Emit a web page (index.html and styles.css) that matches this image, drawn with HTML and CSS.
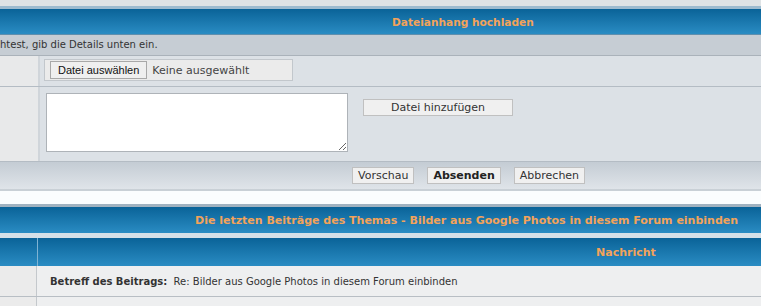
FILE: index.html
```html
<!DOCTYPE html>
<html lang="de">
<head>
  <meta charset="UTF-8" />
  <title>Dateianhang hochladen</title>
  <link rel="stylesheet" href="styles.css">
</head>
<body>
  <div class="panel">
    <div class="cap"></div>
    <div class="head"><span class="title t1">Dateianhang hochladen</span></div>
    <div class="note">htest, gib die Details unten ein.</div>
    <div class="row r1">
      <div class="lab"></div>
      <div class="field">
        <div class="filebox">
          <span class="filebtn">Datei auswählen</span>
          <span class="nofile">Keine ausgewählt</span>
        </div>
      </div>
    </div>
    <div class="row r2">
      <div class="lab"></div>
      <div class="field">
        <textarea class="comment"></textarea>
        <span class="button add">Datei hinzufügen</span>
      </div>
    </div>
    <div class="foot">
      <span class="button">Vorschau</span>
      <span class="button strong">Absenden</span>
      <span class="button">Abbrechen</span>
    </div>
  </div>

  <div class="gap"></div>

  <div class="panel">
    <div class="head h2"><span class="title t2">Die letzten Beiträge des Themas - Bilder aus Google Photos in diesem Forum einbinden</span></div>
    <div class="strip"></div>
    <div class="colhead">
      <div class="lab"></div>
      <div class="colname">Nachricht</div>
    </div>
    <div class="post">
      <div class="lab"></div>
      <div class="subject"><b>Betreff des Beitrags:</b>&nbsp; Re: Bilder aus Google Photos in diesem Forum einbinden</div>
    </div>
    <div class="post last">
      <div class="lab"></div>
      <div class="subject cut">Wenn du die Bilder direkt in den Beitrag einfügen möchtest</div>
    </div>
  </div>
</body>
</html>
```

FILE: styles.css
```css
body {
  margin: 0;
  background-color: #fbfdfe;
  font-family: "DejaVu Sans", Verdana, sans-serif;
  font-size: 10px;
  color: #333;
  overflow: hidden;
}
.cap {
  height: 6px;
  background-color: #dfe3e5;
  border-bottom: 3px solid #9dbbcf;
}
.head {
  height: 25px;
  background: linear-gradient(#0a6398, #2a8cc3);
  display: flex;
  align-items: center;
  border-bottom: 1px solid #5f8fae;
}
.title {
  color: #f3a35a;
  font-weight: bold;
  font-size: 11px;
}
.t1 {
  padding-left: 392px;
  font-size: 10.6px;
}
.t2 {
  padding-left: 195px;
}
.note {
  height: 20px;
  line-height: 20px;
  background-color: #c6cdd4;
  border-bottom: 1px solid #aab2ba;
  color: #333;
}
.row {
  display: flex;
  border-bottom: 1px solid #b4bcc4;
}
.r1 {
  height: 30px;
}
.r2 {
  height: 74px;
}
.lab {
  width: 38px;
  flex: none;
  background-color: #e8e9ea;
  border-right: 2px solid #d0d5da;
}
.field {
  flex: 1;
  background-color: #dce1e6;
  display: flex;
  align-items: flex-start;
  padding-left: 4px;
}
.filebox {
  margin-top: 3px;
  width: 247px;
  height: 20px;
  border: 1px solid #c2c7cc;
  background-color: #ebebeb;
  display: flex;
  align-items: center;
  gap: 5px;
}
.filebtn {
  margin-left: 5px;
  height: 16px;
  padding: 0 7px;
  border: 1px solid #a8a8a8;
  background-color: #efefef;
  font-family: "Liberation Sans", Arial, sans-serif;
  font-size: 11px;
  line-height: 16px;
  color: #111;
}
.nofile {
  font-size: 11px;
  color: #444;
}
.comment {
  margin: 6px 0 0 2px;
  width: 300px;
  height: 57px;
  border: 1px solid #aeb3b8;
  background-color: #fff;
  padding: 0;
  resize: both;
}
.button {
  display: inline-block;
  height: 15px;
  line-height: 15px;
  padding: 0 5px;
  border: 1px solid #c0c0c0;
  background-color: #f0f0f0;
  color: #333;
  font-size: 11px;
}
.add {
  margin: 12px 0 0 15px;
  width: 138px;
  text-align: center;
}
.strong {
  font-weight: bold;
  color: #222;
  padding: 0 5px;
}
.foot {
  height: 27px;
  background: linear-gradient(#c4ccd4, #dfe4e9);
  border-bottom: 2px solid #c9d0d6;
  display: flex;
  align-items: center;
  gap: 13px;
  padding-left: 352px;
}
.gap {
  height: 13px;
  border-bottom: 3px solid #a0b2c0;
}
.h2 {
  border-bottom: none;
  height: 26px;
}
.strip {
  height: 5px;
  background-color: #d5e0e8;
}
.colhead {
  height: 28px;
  display: flex;
  background: linear-gradient(#0a6398, #2a8cc3);
}
.colhead .lab {
  width: 37px;
  background: none;
  border-right: 1px solid #7fb3d3;
}
.colname {
  flex: 1;
  color: #f3a35a;
  font-weight: bold;
  font-size: 11px;
  display: flex;
  align-items: center;
  padding-left: 558px;
}
.post {
  height: 30px;
  display: flex;
  border-bottom: 1px solid #b8bec4;
}
.post .lab {
  width: 36px;
  background-color: #ebebeb;
  border-right: 1px solid #c4c8cc;
}
.subject {
  flex: 1;
  background-color: #eeeff0;
  display: flex;
  align-items: center;
  padding-left: 13px;
  color: #333;
}
.last .subject {
  align-items: flex-end;
  padding-left: 17px;
}
.cut {
  line-height: 10px;
}
```
